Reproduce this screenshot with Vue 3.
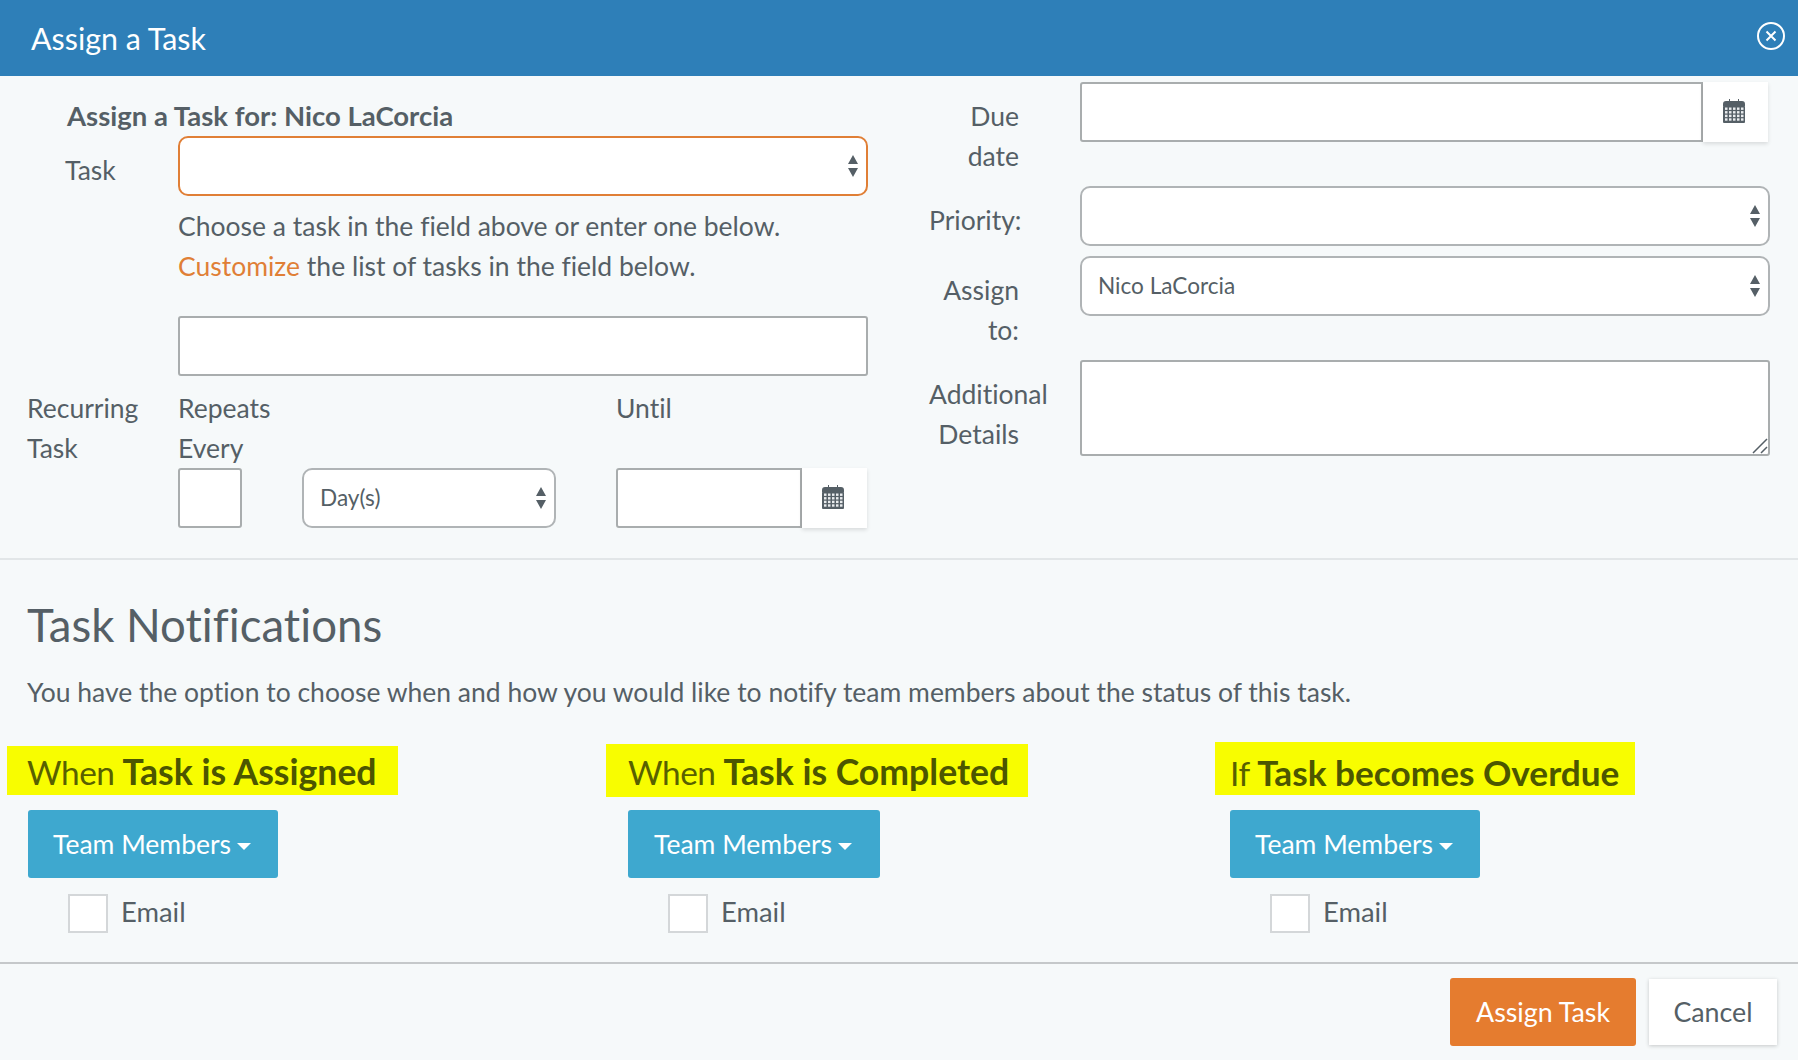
<script setup>
const columns = [
  { lead: 'When', strong: 'Task is Assigned', mark: 'mark-a', btn: '' },
  { lead: 'When', strong: 'Task is Completed', mark: 'mark-b', btn: 'team-wide' },
  { lead: 'If', strong: 'Task becomes Overdue', mark: 'mark-c', btn: '' }
]
const gridDots = []
for (let row = 0; row < 4; row++) {
  for (let col = 0; col < 5; col++) {
    gridDots.push({ x: 2 + col * 4, y: 8.5 + row * 3.6 })
  }
}
</script>

<template>
  <div class="modal">
    <header class="head">
      <span class="head-title">Assign a Task</span>
      <svg class="close" width="30" height="30" viewBox="0 0 30 30">
        <circle cx="15" cy="15" r="13" fill="none" stroke="#fff" stroke-width="2" />
        <path d="M10.5 10.5 19.5 19.5M19.5 10.5 10.5 19.5" fill="none" stroke="#fff" stroke-width="2" />
      </svg>
    </header>

    <section class="top">
      <div class="left">
        <div class="for-title">Assign a Task for: Nico LaCorcia</div>
        <div class="task-row">
          <label class="task-label">Task</label>
          <div class="field select task-select">
            <span></span>
            <svg class="updown" width="10" height="22" viewBox="0 0 10 22"><path d="M5 0 10 9H0ZM0 13H10L5 22Z" fill="#555f66" /></svg>
          </div>
        </div>
        <p class="help">Choose a task in the field above or enter one below.<br /><a class="link">Customize</a> the list of tasks in the field below.</p>
        <div class="field input custom-input"></div>
        <div class="recurring">
          <div class="rec-label">Recurring<br />Task</div>
          <div class="repeats">
            <div class="rep-label">Repeats<br />Every</div>
            <div class="rep-fields">
              <div class="field input number"></div>
              <div class="field select unit">
                <span class="value">Day(s)</span>
                <svg class="updown" width="10" height="22" viewBox="0 0 10 22"><path d="M5 0 10 9H0ZM0 13H10L5 22Z" fill="#555f66" /></svg>
              </div>
            </div>
          </div>
          <div class="until">
            <div class="until-label">Until</div>
            <div class="date">
              <div class="field input date-input"></div>
              <div class="addon">
                <svg width="22" height="24" viewBox="0 0 22 24">
                  <path d="M3 2h3V0h1v2h8V0h1v2h3a3 3 0 0 1 3 3v2.500H0V5a3 3 0 0 1 3-3Z" fill="#555f66" />
                  <rect x="0" y="7" width="22" height="17" rx="1" fill="#555f66" />
                  <rect v-for="(d, i) in gridDots" :key="i" :x="d.x" :y="d.y" width="2.500" height="2.400" fill="#e9ecee" />
                </svg>
              </div>
            </div>
          </div>
        </div>
      </div>

      <div class="right">
        <div class="r-row due">
          <label class="r-label">Due<br />date</label>
          <div class="date grow due-date">
            <div class="field input date-input grow"></div>
            <div class="addon">
              <svg width="22" height="24" viewBox="0 0 22 24">
                <path d="M3 2h3V0h1v2h8V0h1v2h3a3 3 0 0 1 3 3v2.500H0V5a3 3 0 0 1 3-3Z" fill="#555f66" />
                <rect x="0" y="7" width="22" height="17" rx="1" fill="#555f66" />
                <rect v-for="(d, i) in gridDots" :key="i" :x="d.x" :y="d.y" width="2.500" height="2.400" fill="#e9ecee" />
              </svg>
            </div>
          </div>
        </div>
        <div class="r-row">
          <label class="r-label">Priority:</label>
          <div class="field select grow">
            <span></span>
            <svg class="updown" width="10" height="22" viewBox="0 0 10 22"><path d="M5 0 10 9H0ZM0 13H10L5 22Z" fill="#555f66" /></svg>
          </div>
        </div>
        <div class="r-row">
          <label class="r-label">Assign<br />to:</label>
          <div class="field select grow">
            <span class="value">Nico LaCorcia</span>
            <svg class="updown" width="10" height="22" viewBox="0 0 10 22"><path d="M5 0 10 9H0ZM0 13H10L5 22Z" fill="#555f66" /></svg>
          </div>
        </div>
        <div class="r-row details">
          <label class="r-label">Additional<br />Details</label>
          <div class="field input area grow">
            <svg class="grip" width="16" height="16" viewBox="0 0 16 16"><path d="M1 15 15 1M9 15 15 9" fill="none" stroke="#555f66" stroke-width="1.500" /></svg>
          </div>
        </div>
      </div>
    </section>

    <section class="notify">
      <h2 class="notify-title">Task Notifications</h2>
      <p class="notify-text">You have the option to choose when and how you would like to notify team members about the status of this task.</p>
      <div class="cols">
        <div v-for="c in columns" :key="c.strong" class="col">
          <div class="col-head">
            <h4 class="mark" :class="c.mark">{{ c.lead }} <b>{{ c.strong }}</b></h4>
          </div>
          <button class="team" :class="c.btn">Team Members<i class="caret"></i></button>
          <div class="email">
            <span class="check"></span>
            <span class="email-text">Email</span>
          </div>
        </div>
      </div>
    </section>

    <footer class="foot">
      <button class="assign">Assign Task</button>
      <button class="cancel">Cancel</button>
    </footer>
  </div>
</template>

<style>
html, body { margin: 0; padding: 0; background: #f6f9fa; }
</style>

<style scoped>
.modal {
  width: 1798px;
  height: 1060px;
  overflow: hidden;
  background: #f6f9fa;
  color: #555f66;
  font-family: "Lato", "Liberation Sans", sans-serif;
  font-size: 26.5px;
  line-height: 40px;
  font-variant-ligatures: none;
}
.head {
  height: 76px;
  background: #2e7fb8;
  color: #fff;
  display: flex;
  align-items: center;
  justify-content: space-between;
  padding: 0 12px 0 31px;
  box-sizing: border-box;
}
.head-title { font-size: 30.4px; }
.close { margin-top: -4px; }
.top {
  display: flex;
  height: 484px;
  box-sizing: border-box;
  border-bottom: 2px solid #e2e6e8;
}
.left { width: 898px; box-sizing: border-box; padding: 20px 0 0 27px; }
.right { width: 900px; box-sizing: border-box; padding: 6px 28px 0 31px; }
.for-title { margin-left: 40px; font-weight: 700; font-size: 27.5px; }
.task-row { display: flex; }
.task-label { width: 151px; box-sizing: border-box; padding: 14px 0 0 38px; }
.field {
  box-sizing: border-box;
  height: 60px;
  background: #fff;
  border: 2px solid #a9adae;
  display: flex;
  align-items: center;
  justify-content: space-between;
}
.input { border-radius: 3px; }
.select { border-radius: 10px; padding: 0 8px 0 16px; border-color: #b0b4b6; }
.task-select { width: 690px; border: 2px solid #e07f36; }
.value { font-size: 22.6px; margin-top: -1px; }
.help { margin: 10px 0 0 151px; }
.link { color: #e07f36; }
.custom-input { width: 690px; margin: 30px 0 0 151px; }
.recurring { display: flex; margin-top: 12px; }
.rec-label { width: 151px; }
.repeats { width: 438px; }
.rep-label { height: 80px; }
.rep-fields { display: flex; gap: 60px; }
.number { width: 64px; }
.unit { width: 254px; }
.until { width: 251px; }
.until-label { height: 80px; }
.date { display: flex; }
.due-date { margin-right: 2px; }
.date-input { width: 186px; border-radius: 3px 0 0 3px; }
.addon {
  box-sizing: border-box;
  width: 65px;
  height: 60px;
  padding: 0 3px 3px 0;
  background: #fff;
  box-shadow: 0 2px 4px rgba(0, 0, 0, 0.12);
  display: flex;
  align-items: center;
  justify-content: center;
}
.grow { flex: 1; min-width: 0; }
.r-row { display: flex; margin-bottom: 10px; }
.due { height: 94px; }
.r-label {
  width: 90px;
  margin-right: 61px;
  padding-top: 14px;
  text-align: right;
  flex: none;
}
.area { height: 96px; position: relative; }
.grip { position: absolute; right: 0; bottom: 0; }
.notify { box-sizing: border-box; height: 404px; padding: 35px 0 0 27px; border-bottom: 2px solid #c5c8ca; }
.notify-title { margin: 0; font-size: 45.6px; line-height: 60px; font-weight: 400; }
.notify-text { margin: 17px 0 0; }
.cols { display: grid; grid-template-columns: 600px 602px 1fr; margin: 30px 0 0 1px; }
.col-head { height: 68px; display: flex; align-items: flex-start; }
.mark {
  margin: 0;
  background: #f8fd00;
  color: #586000;
  font-size: 33.4px;
  letter-spacing: -0.45px;
  font-weight: 400;
  white-space: nowrap;
}
.mark b { color: #4c5600; font-weight: 700; font-size: 35.6px; letter-spacing: 0; }
.mark-a { margin: 4px 0 0 -21px; padding: 0 21px 0 20px; height: 49px; line-height: 52px; }
.mark-b { margin: 2px 0 0 -22px; padding: 0 19px 0 22px; height: 53px; line-height: 56px; }
.mark-c { margin: 0 0 0 -15px; padding: 0 16px 0 15px; height: 53px; line-height: 60px; }
.mark-c b { font-size: 35.2px; }
.team {
  display: flex;
  align-items: center;
  justify-content: center;
  width: 250px;
  height: 68px;
  border: 0;
  border-radius: 3px;
  background: #3ea8cf;
  color: #fff;
  font: inherit;
  padding: 0 2px 0 0;
}
.team-wide { width: 252px; }
.caret {
  margin: 4px 0 0 6px;
  border-top: 7px solid #fff;
  border-left: 7px solid transparent;
  border-right: 7px solid transparent;
}
.email { display: flex; align-items: center; margin: 16px 0 0 40px; height: 39px; }
.email-text { font-size: 27.4px; margin-top: -3px; }
.check {
  box-sizing: border-box;
  width: 40px;
  height: 39px;
  margin-right: 13px;
  background: #fff;
  border: 2px solid #d4d7d9;
}
.foot { display: flex; justify-content: flex-end; gap: 13px; padding: 14px 21px 0 0; align-items: flex-start; }
.assign, .cancel { font: inherit; border: 0; padding: 0; font-size: 26.8px; }
.assign { width: 186px; height: 68px; background: #e57c2f; color: #fff; border-radius: 3px; }
.cancel { width: 128px; height: 66px; margin-top: 1px; background: #fff; color: #555f66; box-shadow: 0 1px 4px rgba(0, 0, 0, 0.2); }
</style>
